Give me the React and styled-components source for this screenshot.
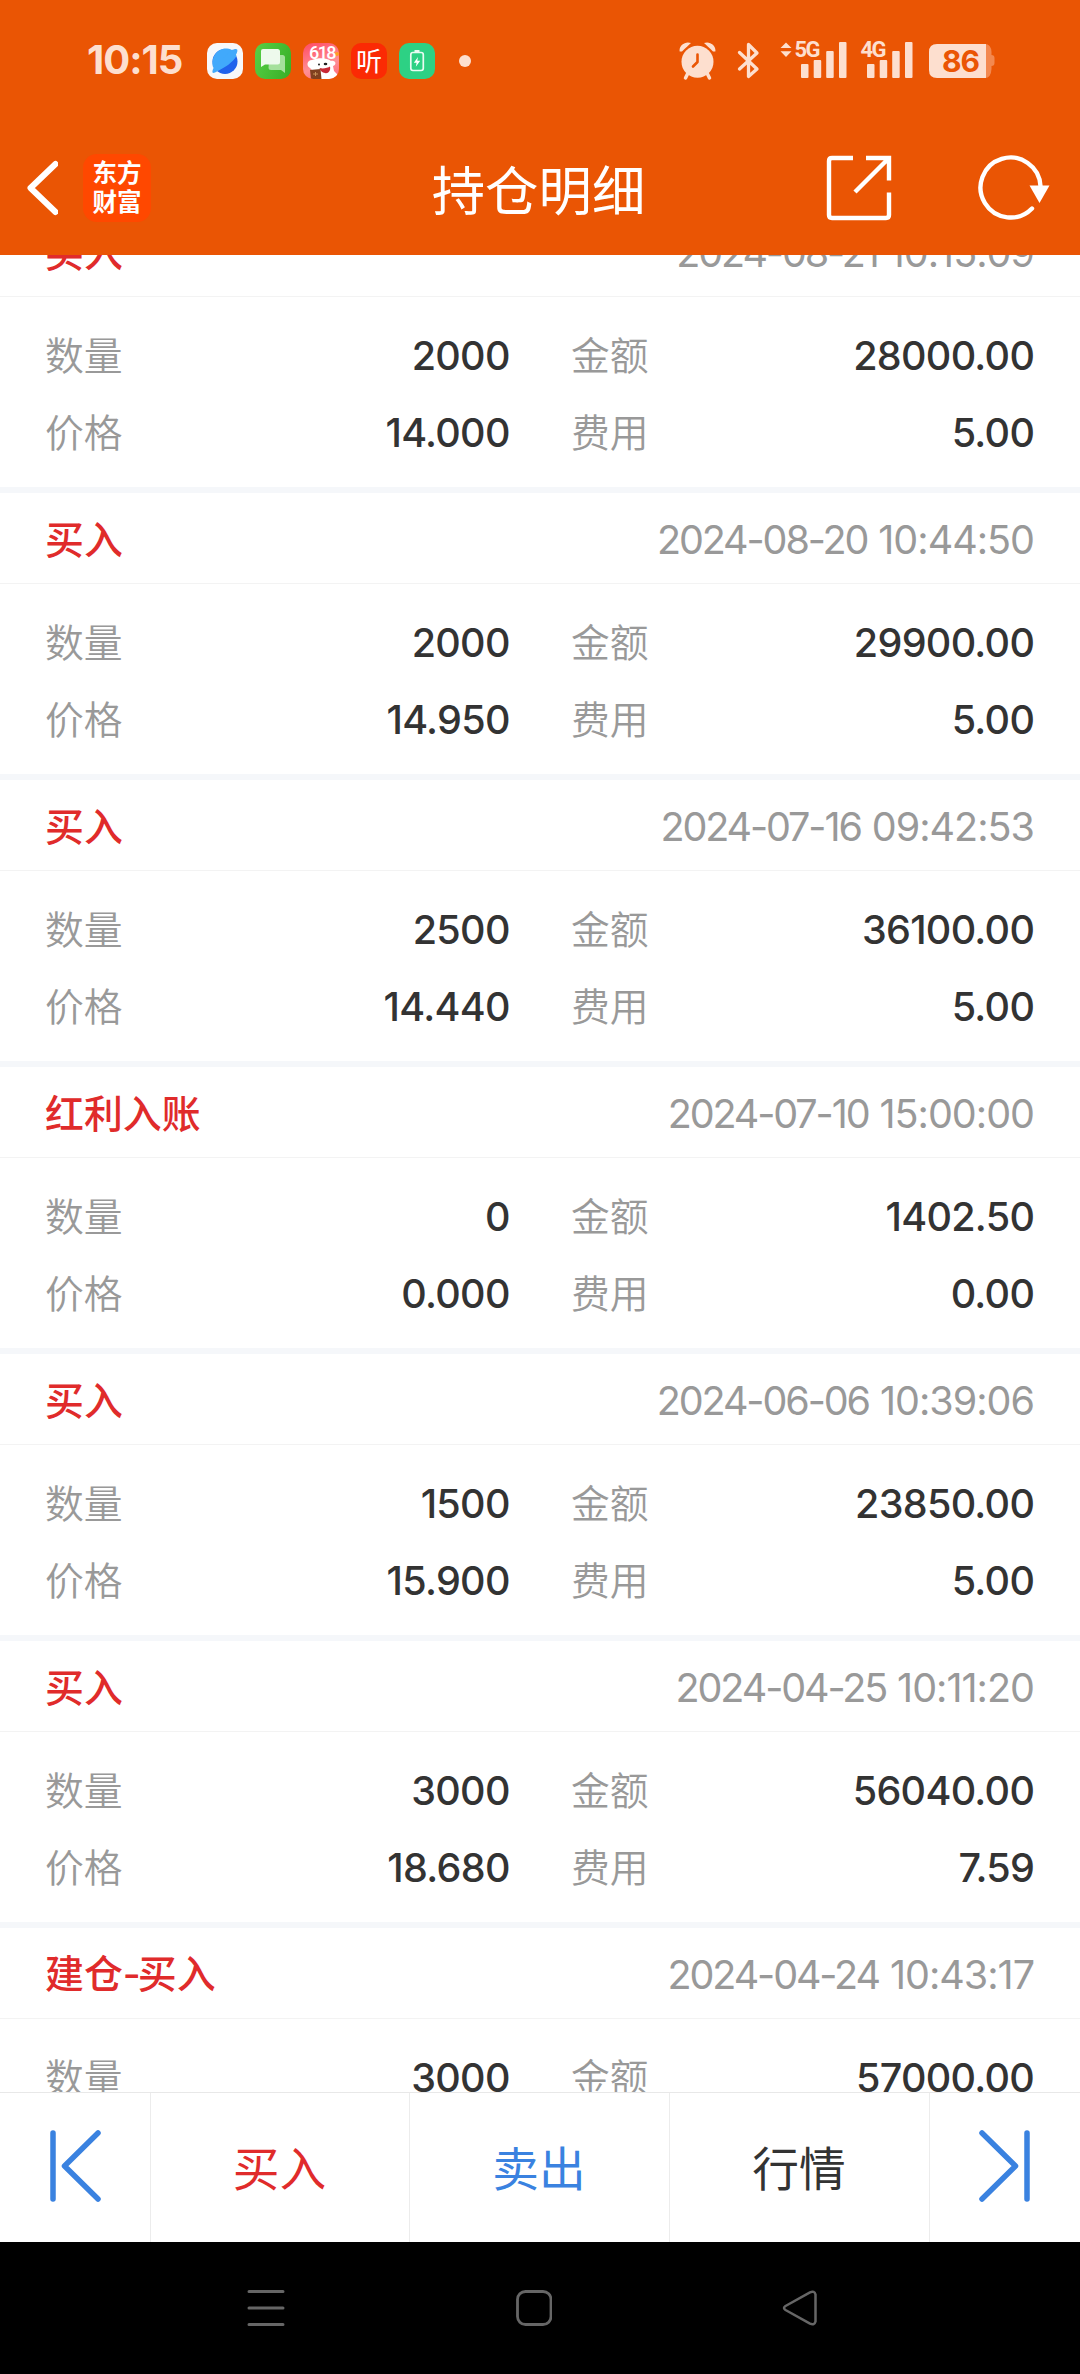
import React from 'react';
import styled, { createGlobalStyle } from 'styled-components';

const Global = createGlobalStyle`
  * { box-sizing: border-box; }
  body { margin: 0; background: #fff; }
`;

const cjk = '"Noto Sans CJK SC", sans-serif';
const num = 'Inter, "Noto Sans CJK SC", sans-serif';
const tint = '#fddfcf';
const orange = '#ea5504';

const Screen = styled.div`
  width: 1080px;
  height: 2374px;
  display: flex;
  flex-direction: column;
  overflow: hidden;
  background: #fff;
  font-family: ${cjk};
`;

const Top = styled.header`
  flex: 0 0 255px;
  background: ${orange};
`;

const StatusBar = styled.div`
  height: 122px;
  display: flex;
  align-items: center;
  padding: 0 85px 0 87px;
`;

const Clock = styled.div`
  width: 120px;
  padding-bottom: 2px;
  font: 700 40px/48px ${num};
  letter-spacing: -1px;
  color: ${tint};
`;

const AppIcons = styled.div`
  display: flex;
  gap: 12px;
`;

const AppIcon = styled.div`
  position: relative;
  width: 36px;
  height: 36px;
  border-radius: 10px;
  overflow: hidden;
  background: ${(p) => p.$bg};
  svg { display: block; }
`;

const Sale = styled.span`
  position: absolute;
  left: 6px;
  top: 1px;
  font: 500 18px/18px Roboto, sans-serif;
  letter-spacing: -1.6px;
  color: #fff;
`;

const Listen = styled.span`
  display: block;
  width: 36px;
  text-align: center;
  font: 400 26px/34px ${cjk};
  color: #fff;
`;

const Dot = styled.div`
  width: 12px;
  height: 12px;
  margin-left: 24px;
  border-radius: 50%;
  background: ${tint};
`;

const System = styled.div`
  margin-left: auto;
  display: flex;
  align-items: center;
  svg { display: block; }
`;

const BluetoothSlot = styled.div`
  margin-left: 20px;
`;

const Signal = styled.div`
  position: relative;
  width: ${(p) => p.$w}px;
  height: 38px;
  margin-left: ${(p) => p.$ml}px;
`;

const SignalLabel = styled.span`
  position: absolute;
  right: 28px;
  top: -4px;
  font: 700 22px/24px Roboto, sans-serif;
  letter-spacing: -1.5px;
  color: ${tint};
`;

const Battery = styled.div`
  position: relative;
  width: 66px;
  height: 34px;
  margin-left: 16px;
`;

const BatteryText = styled.span`
  position: absolute;
  left: 0;
  top: 0;
  width: 63px;
  text-align: center;
  font: 700 30px/35px ${num};
  letter-spacing: -1px;
  color: ${orange};
`;

const NavBar = styled.div`
  height: 133px;
  padding: 0 29px 2px 26px;
  display: grid;
  grid-template-columns: 1fr auto 1fr;
  align-items: center;
  svg { display: block; }
`;

const NavLeft = styled.div`
  display: flex;
  align-items: center;
  gap: 25px;
`;

const NavRight = styled.div`
  display: flex;
  justify-content: flex-end;
  align-items: center;
  gap: 85px;
`;

const Brand = styled.div`
  width: 68px;
  height: 68px;
  padding-bottom: 3px;
  border-radius: 14px;
  background: #ff4800;
  display: flex;
  flex-direction: column;
  align-items: center;
  justify-content: center;
  font: 700 24.5px/29px ${cjk};
  color: #fff;
`;

const Title = styled.h1`
  margin: 0;
  font: 400 53.4px/72px ${cjk};
  color: #fff;
`;

const List = styled.main`
  flex: 1 1 0;
  min-height: 0;
  overflow: hidden;
`;

const Scrolled = styled.div`
  margin-top: -49px;
`;

const Record = styled.section`
  height: 287px;
  border-bottom: 6px solid #f5f7fa;
`;

const RecordHead = styled.div`
  height: 91px;
  padding: 0 47px 0 45px;
  display: flex;
  align-items: center;
  justify-content: space-between;
  border-bottom: 1px solid #f3f3f3;
`;

const Kind = styled.div`
  padding-bottom: 2px;
  font: 500 38.9px/50px ${cjk};
  color: #e02b2b;
`;

const Hyphen = styled.span`
  font-family: Inter, sans-serif;
  letter-spacing: -3px;
`;

const Stamp = styled.time`
  display: flex;
  gap: 11px;
  padding-top: 3px;
  font: 400 39.5px/50px ${num};
  color: #999;
`;

const Day = styled.span`
  letter-spacing: -2.1px;
`;

const Clocked = styled.span`
  letter-spacing: -1px;
  margin-right: -1px;
`;

const Fields = styled.dl`
  margin: 0;
  padding: 20px 45px 0;
  display: grid;
  grid-template-columns: 464px 462.5px;
  grid-auto-rows: 77px;
  column-gap: 62px;
`;

const Field = styled.div`
  display: flex;
  align-items: center;
  justify-content: space-between;
`;

const Name = styled.dt`
  padding-bottom: 5px;
  font: 350 38.8px/50px ${cjk};
  color: #999;
`;

const Value = styled.dd`
  margin: 0 -0.7px 0 0;
  font: 500 39.5px/50px ${num};
  letter-spacing: -0.7px;
  color: #333;
`;

const Actions = styled.footer`
  flex: 0 0 150px;
  display: grid;
  grid-template-columns: 151px 259px 260px 260px 150px;
  border-top: 1px solid #e8e8e8;
  background: #fff;
`;

const Action = styled.button`
  margin: 0;
  padding: ${(p) => (p.$last ? '0 0 3px 1px' : '0 1px 3px 0')};
  display: flex;
  align-items: center;
  justify-content: center;
  border: 0;
  border-right: 1px solid ${(p) => (p.$last ? 'transparent' : '#ececec')};
  background: none;
  font: 400 46.7px/60px ${cjk};
  color: ${(p) => p.$color};
`;

const SystemNav = styled.nav`
  flex: 0 0 132px;
  display: flex;
  align-items: center;
  padding-left: 246px;
  gap: 226px;
  background: #000;
  svg { display: block; }
`;

const Bars = () => (
  <svg width="46" height="38" viewBox="0 0 46 38">
    <g fill={tint}>
      <rect x="0" y="24" width="7.5" height="14" rx="1" />
      <rect x="12.7" y="20" width="7.5" height="18" rx="1" />
      <rect x="25.2" y="11" width="7.5" height="27" rx="1" />
      <rect x="38" y="2" width="7.5" height="36" rx="1" />
    </g>
  </svg>
);

const BarsSlot = styled.div`
  position: absolute;
  right: 0;
  top: -2px;
`;

const records = [
  ['买入', '2024-08-21 10:15:09', '2000', '28000.00', '14.000', '5.00'],
  ['买入', '2024-08-20 10:44:50', '2000', '29900.00', '14.950', '5.00'],
  ['买入', '2024-07-16 09:42:53', '2500', '36100.00', '14.440', '5.00'],
  ['红利入账', '2024-07-10 15:00:00', '0', '1402.50', '0.000', '0.00'],
  ['买入', '2024-06-06 10:39:06', '1500', '23850.00', '15.900', '5.00'],
  ['买入', '2024-04-25 10:11:20', '3000', '56040.00', '18.680', '7.59'],
  [<>建仓<Hyphen>-</Hyphen>买入</>, '2024-04-24 10:43:17', '3000', '57000.00'],
];

function StatusIcons() {
  return (
    <AppIcons>
      <AppIcon $bg="#f7f8fa">
        <svg width="36" height="36" viewBox="0 0 36 36">
          <circle cx="18" cy="18.500" r="12.500" fill="#2062ec" />
          <path d="M6 24C3.500 14 11 4.500 20 5.500C25 6 28.500 9 29.500 13C26 19 18 25 9.500 28Z" fill="#41a9fb" />
          <path d="M24 7.500C29 5 31.500 5.500 30 9.500C29 13 25 17 20 21C15 25.500 11 28 8 29.500C4.500 31 5 28 7 24Z" fill="#41a9fb" />
        </svg>
      </AppIcon>
      <AppIcon $bg="linear-gradient(110deg, #58cf45, #37ae26)">
        <svg width="36" height="36" viewBox="0 0 36 36">
          <path d="M14.500 12h13a2.500 2.500 0 0 1 2.500 2.500V30l-4-3H16a2.500 2.500 0 0 1-2.500-2.500Z" fill="#a5e09b" />
          <path d="M8 6h14.500a2.500 2.500 0 0 1 2.500 2.500v10.500a2.500 2.500 0 0 1-2.500 2.500H10L6 24V8a2 2 0 0 1 2-2Z" fill="#eefaec" />
        </svg>
      </AppIcon>
      <AppIcon $bg="linear-gradient(160deg, #ff4a63, #ff8f95 60%, #ff6675)">
        <svg width="36" height="36" viewBox="0 0 36 36">
          <path d="M7 25C3 23 4 17 9 17C15 14.500 24 14.500 28 18C33 17 34 22 30 23L31 28L36 33V36H15L10 28Z" fill="#fff" />
          <circle cx="16" cy="21.500" r="1" fill="#222" />
          <ellipse cx="22.500" cy="21" rx="1.800" ry="1.300" fill="#222" />
          <path d="M16.500 25C20 26 25 25 27 23.500C28 28 25 31 22 30C19 29.500 17.500 28 16.500 25Z" fill="#c92835" />
          <path d="M7 27l10.500-1 1 10H8Z" fill="#80401f" />
          <path d="M10 31h5M12.500 29v4" stroke="#c79158" strokeWidth="1" />
          <circle cx="34" cy="11" r="2" fill="#ff9f25" />
        </svg>
        <Sale>618</Sale>
      </AppIcon>
      <AppIcon $bg="#fb2a04"><Listen>听</Listen></AppIcon>
      <AppIcon $bg="#2dd184">
        <svg width="36" height="36" viewBox="0 0 36 36" fill="none">
          <rect x="11.800" y="9.500" width="12.500" height="18" rx="2.200" stroke="#e9fbf2" strokeWidth="1.700" />
          <path d="M15.500 8.200h5" stroke="#e9fbf2" strokeWidth="2.200" />
          <path d="M19 14l-4.200 5.800h2.800l-.8 4 4.400-6h-2.900Z" fill="#fff" />
        </svg>
      </AppIcon>
    </AppIcons>
  );
}

export default function App() {
  return (
    <Screen>
      <Global />
      <Top>
        <StatusBar>
          <Clock>10:15</Clock>
          <StatusIcons />
          <Dot />
          <System>
            <svg width="38" height="40" viewBox="0 0 38 40">
              <circle cx="18.500" cy="20.800" r="16" fill={tint} />
              <path d="M.7 10.500C-.5 5 6 -.5 12 2Q9 4.500 3 10.500ZM36.300 10.500C37.500 5 31 -.5 25 2Q28 4.500 34 10.500Z" fill={tint} />
              <path d="M9 32l-2.500 5M28 32l2.500 5" stroke={tint} strokeWidth="3.500" strokeLinecap="round" />
              <path d="M18.500 13.500v7.500l-4.500 4.500" fill="none" stroke={orange} strokeWidth="2.600" strokeLinecap="round" strokeLinejoin="round" />
            </svg>
            <BluetoothSlot>
              <svg width="24" height="40" viewBox="0 0 24 40">
                <path d="M2.500 11.500L20 28 11.500 35.500V3.500L20 12 2.500 28" fill="none" stroke={tint} strokeWidth="3.300" strokeLinecap="round" strokeLinejoin="round" />
              </svg>
            </BluetoothSlot>
            <Signal $w={67} $ml={19}>
              <svg width="12" height="16" viewBox="0 0 12 16">
                <path d="M6 .5L11.500 6H.5ZM6 15L.5 9.300h11Z" fill={tint} />
              </svg>
              <SignalLabel>5G</SignalLabel>
              <BarsSlot><Bars /></BarsSlot>
            </Signal>
            <Signal $w={52} $ml={14}>
              <SignalLabel>4G</SignalLabel>
              <BarsSlot><Bars /></BarsSlot>
            </Signal>
            <Battery>
              <svg width="66" height="34" viewBox="0 0 66 34">
                <path d="M55 0h1q6 0 6.500 8v3q3 0 3 3v5q0 3-3 3v3q-.5 9-6.500 9h-1Z" fill="#f3884f" />
                <path d="M8 0h49v34H8q-8 0-8-8V8q0-8 8-8Z" fill={tint} />
              </svg>
              <BatteryText>86</BatteryText>
            </Battery>
          </System>
        </StatusBar>
        <NavBar>
          <NavLeft>
            <svg width="32" height="58" viewBox="0 0 32 58">
              <path d="M29.500 5L4.500 29l25 24" fill="none" stroke="#fff" strokeWidth="6" strokeLinecap="round" strokeLinejoin="round" />
            </svg>
            <Brand>
              <span>东方</span>
              <span>财富</span>
            </Brand>
          </NavLeft>
          <Title>持仓明细</Title>
          <NavRight>
            <svg width="66" height="66" viewBox="0 0 66 66">
              <path d="M27 3H6Q3 3 3 6V60Q3 63 6 63H60Q63 63 63 60V37.500M63 25.500V3H40M62 4L29 37" fill="none" stroke="#fff" strokeWidth="4.400" />
            </svg>
            <svg width="74" height="66" viewBox="0 0 74 66">
              <path d="M63.500 31A30 30 0 1 0 55 53.500" fill="none" stroke="#fff" strokeWidth="4.400" strokeLinecap="round" />
              <path d="M52.500 30.500h20L62.500 48Z" fill="#fff" />
            </svg>
          </NavRight>
        </NavBar>
      </Top>
      <List>
        <Scrolled>
          {records.map(([kind, time, qty, amount, price, fee]) => {
            const [day, clock] = time.split(' ');
            return (
              <Record key={time}>
                <RecordHead>
                  <Kind>{kind}</Kind>
                  <Stamp><Day>{day}</Day> <Clocked>{clock}</Clocked></Stamp>
                </RecordHead>
                <Fields>
                  <Field><Name>数量</Name><Value>{qty}</Value></Field>
                  <Field><Name>金额</Name><Value>{amount}</Value></Field>
                  {price && <Field><Name>价格</Name><Value>{price}</Value></Field>}
                  {fee && <Field><Name>费用</Name><Value>{fee}</Value></Field>}
                </Fields>
              </Record>
            );
          })}
        </Scrolled>
      </List>
      <Actions>
        <Action>
          <svg width="60" height="76" viewBox="0 0 60 76">
            <path d="M8 5v66M53 5L19.500 38 53 71" fill="none" stroke="#3a82e0" strokeWidth="5.500" strokeLinecap="round" strokeLinejoin="round" />
          </svg>
        </Action>
        <Action $color="#e02b2b">买入</Action>
        <Action $color="#3a82e0">卖出</Action>
        <Action $color="#333">行情</Action>
        <Action $last>
          <svg width="60" height="76" viewBox="0 0 60 76">
            <path d="M52 5v66M7 5L40.500 38 7 71" fill="none" stroke="#3a82e0" strokeWidth="5.500" strokeLinecap="round" strokeLinejoin="round" />
          </svg>
        </Action>
      </Actions>
      <SystemNav>
        <svg width="40" height="40" viewBox="0 0 40 40">
          <path d="M3 3.500h34M3 20h34M3 36.500h34" stroke="#666" strokeWidth="3" strokeLinecap="round" />
        </svg>
        <svg width="40" height="40" viewBox="0 0 40 40">
          <rect x="5.500" y="3.500" width="33.500" height="33" rx="8" fill="none" stroke="#666" strokeWidth="2.800" />
        </svg>
        <svg width="40" height="40" viewBox="0 0 40 40">
          <path d="M7.500 18L32 4.300Q36.500 2.500 37.500 6.500V33.500Q36.500 37.500 32 35.700L7.500 22Q4.500 20 7.500 18Z" fill="none" stroke="#666" strokeWidth="2.500" strokeLinejoin="round" />
        </svg>
      </SystemNav>
    </Screen>
  );
}
